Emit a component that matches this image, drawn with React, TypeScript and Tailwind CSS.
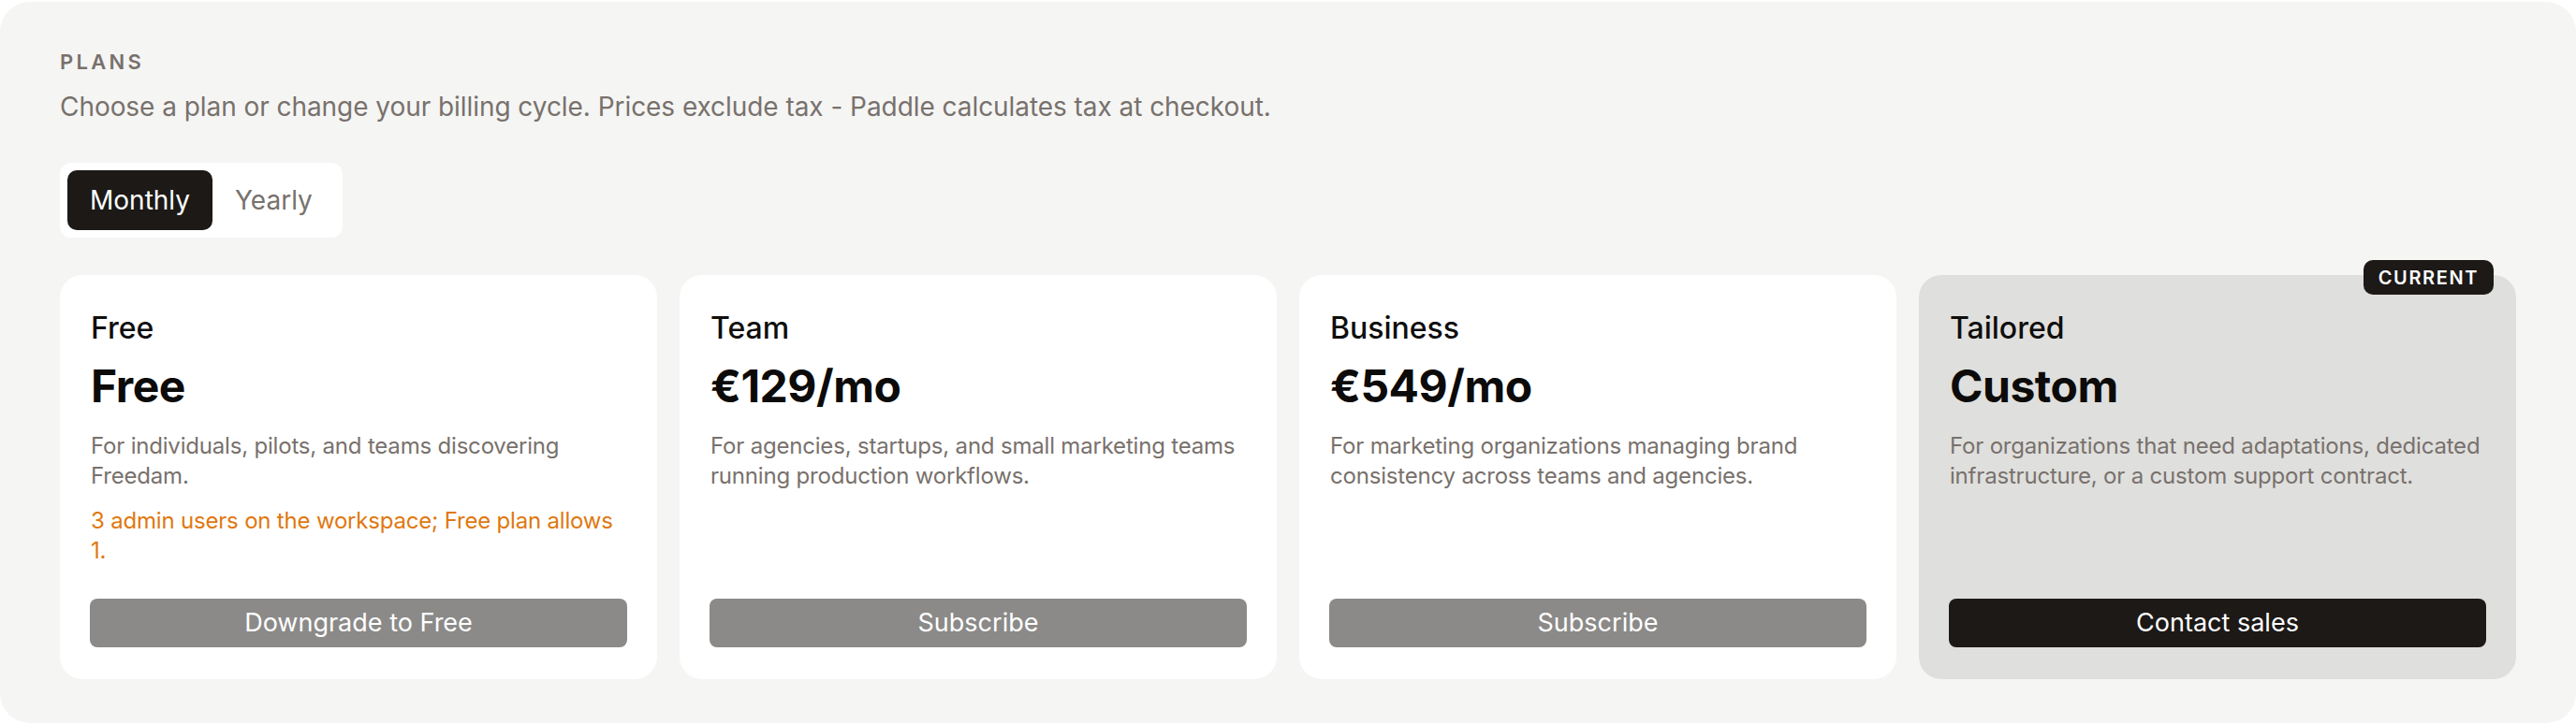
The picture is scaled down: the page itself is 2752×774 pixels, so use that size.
import React from 'react'

interface Plan {
  name: string
  price: string
  description: string
  warning?: string
  action: string
  current?: boolean
}

const plans: Plan[] = [
  {
    name: 'Free',
    price: 'Free',
    description: 'For individuals, pilots, and teams discovering Freedam.',
    warning: '3 admin users on the workspace; Free plan allows 1.',
    action: 'Downgrade to Free',
  },
  {
    name: 'Team',
    price: '€129/mo',
    description: 'For agencies, startups, and small marketing teams running production workflows.',
    action: 'Subscribe',
  },
  {
    name: 'Business',
    price: '€549/mo',
    description: 'For marketing organizations managing brand consistency across teams and agencies.',
    action: 'Subscribe',
  },
  {
    name: 'Tailored',
    price: 'Custom',
    description: 'For organizations that need adaptations, dedicated infrastructure, or a custom support contract.',
    action: 'Contact sales',
    current: true,
  },
]

const PlanCard = ({ plan }: { plan: Plan }) => {
  return (
    <div
      className={
        plan.current
          ? 'relative flex flex-col rounded-[24px] bg-[#dfdfdd] px-8 pt-[33px] pb-[34px]'
          : 'relative flex flex-col rounded-[24px] bg-white px-8 pt-[33px] pb-[34px]'
      }
    >
      {plan.current && (
        <span className="absolute -top-4 right-6 flex h-[37px] items-center rounded-[10px] bg-[#1c1917] px-4 text-[20px] font-semibold tracking-[0.08em] text-white">
          CURRENT
        </span>
      )}
      <div className="flex-1 pl-px">
        <h3 className="text-[32px] leading-[48px] font-medium text-[#0f0e0d]">{plan.name}</h3>
        <div className="mt-[6px] text-[48px] leading-[64px] font-bold tracking-[-0.01em] text-[#0c0b0a]">
          {plan.price}
        </div>
        <p className="mt-4 text-[24px] leading-8 tracking-[-0.008em] text-[#78716c]">{plan.description}</p>
        {plan.warning && (
          <p className="mt-4 text-[24px] leading-8 tracking-[-0.008em] text-[#e0780f]">{plan.warning}</p>
        )}
      </div>
      <button
        className={
          plan.current
            ? 'mt-[35px] h-[52px] w-full shrink-0 rounded-[8px] bg-[#1c1917] text-[27px] text-white'
            : 'mt-[35px] h-[52px] w-full shrink-0 rounded-[8px] bg-[#8b8a88] text-[27px] text-white'
        }
      >
        {plan.action}
      </button>
    </div>
  )
}

export default function App() {
  return (
    <div className="min-h-screen bg-white font-['Inter',_'Liberation_Sans',_sans-serif]">
      <section className="mt-[2px] h-[771px] rounded-[32px] bg-[#f5f5f4] px-16 pt-12">
        <p className="text-[22px] leading-8 font-semibold tracking-[0.15em] text-[#78716c]">PLANS</p>
        <p className="mt-3 text-[28px] leading-10 tracking-[-0.002em] text-[#78716c]">
          Choose a plan or change your billing cycle. Prices exclude tax - Paddle calculates tax at checkout.
        </p>

        <div className="mt-10 inline-flex rounded-[12px] bg-white p-2">
          <button className="h-16 rounded-[10px] bg-[#1c1917] px-6 text-[28px] text-white">Monthly</button>
          <button className="h-16 rounded-[10px] px-6 text-[28px] text-[#78716c]">Yearly</button>
        </div>

        <div className="mt-10 grid grid-cols-4 gap-6">
          {plans.map((plan) => (
            <PlanCard key={plan.name} plan={plan} />
          ))}
        </div>
      </section>
    </div>
  )
}
